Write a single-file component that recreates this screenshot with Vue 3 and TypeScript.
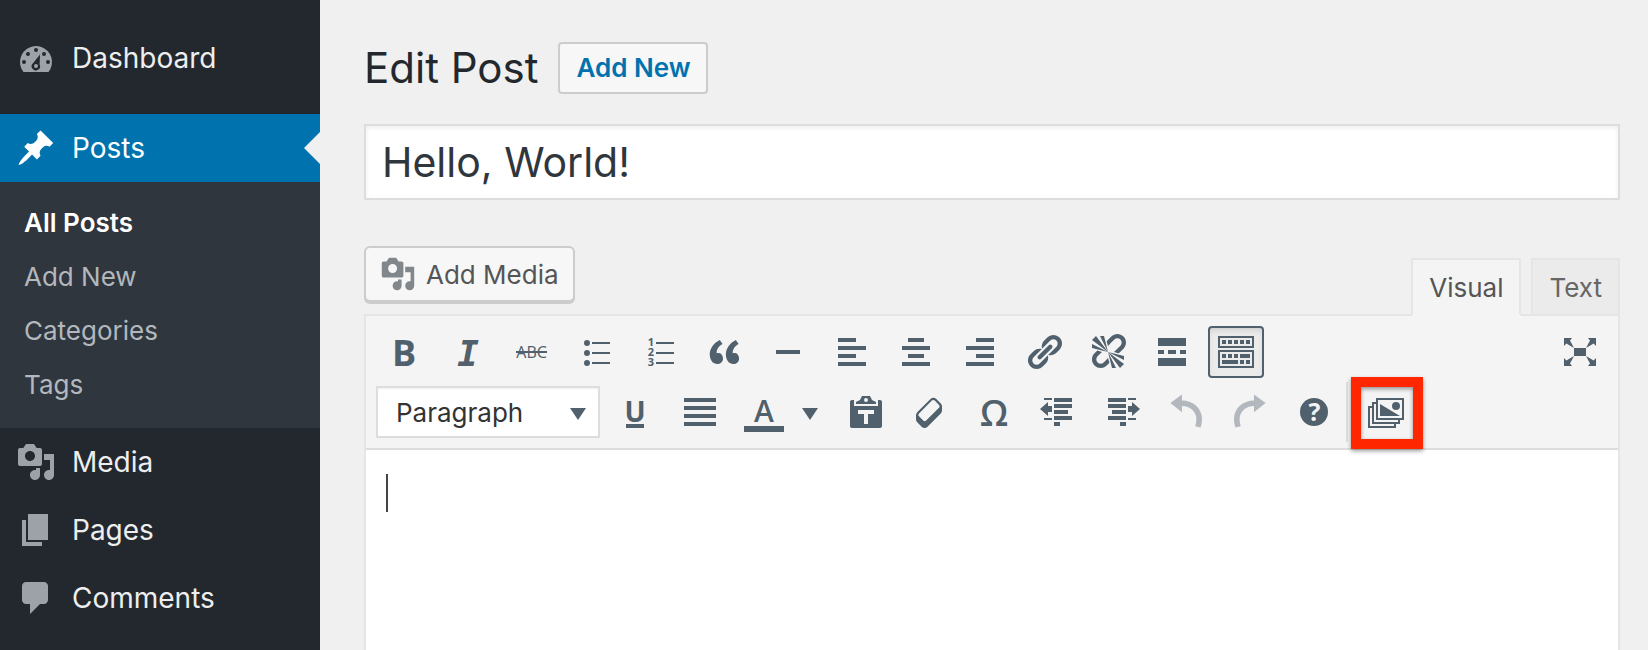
<script setup lang="ts">
import { h, ref, type FunctionalComponent } from 'vue'

interface Label {
  t: string
  x: number
  y: number
  size: number
  weight?: number
  family?: string
  style?: string
  fill?: string
}

interface Glyph {
  d?: string
  labels?: Label[]
  flip?: boolean
  solid?: boolean
}

const outdentPath =
  'M3 3h4v1H3zM3 13h4v1H3zM8 3h9v2H8zM8 6h9v2H8zM8 9h7v2H8zM8 12h9v2H8zM8 15h3v2H8zM1 8.5L5 5v2h2v3H5v2z'
const undoPath =
  'M2.2 5.5L8 1.2v3C13.6 4.2 18 8.2 18 13.4c0 1.4-.2 2.9-.7 4.3l-2.7-.6c.4-1.1.6-2.3.6-3.5C15.2 9.900 12.1 7 8 7v3.1z'
const dotsRow = [3, 6, 9, 12, 15].map((x) => `M${x} 4h2v2h-2z`).join('')

const glyphs: Record<string, Glyph> = {
  dashboard: {
    d: 'M3.76 17h12.48A8 8 0 1 0 2 12c0 1.9.66 3.64 1.76 5zM10 5a1 1 0 1 1 0 2 1 1 0 0 1 0-2zM6 7a1 1 0 1 1 0 2 1 1 0 0 1 0-2zM14 7a1 1 0 1 1 0 2 1 1 0 0 1 0-2zM4 11a1 1 0 1 1 0 2 1 1 0 0 1 0-2zM16 11a1 1 0 1 1 0 2 1 1 0 0 1 0-2zM12 8.200l-.2 5a2.100 2.100 0 1 1-3.300-.6zM10 13a1 1 0 1 0 0 2 1 1 0 0 0 0-2z',
  },
  pin: {
    d: 'M10.44 3.02l1.82-1.82 6.36 6.35-1.83 1.82c-1.05-.68-2.48-.57-3.41.36l-.75.75c-.92.93-1.04 2.35-.35 3.41l-1.83 1.82-2.41-2.41-2.8 2.79c-.42.42-3.38 2.71-3.8 2.29s1.86-3.39 2.28-3.81l2.79-2.79L4.1 9.36l1.83-1.82c1.05.69 2.48.57 3.4-.36l.75-.75c.93-.92 1.05-2.35.36-3.41z',
  },
  media: {
    d: 'M13 11V4c0-.55-.45-1-1-1h-1.67L9 1H5L3.67 3H2c-.55 0-1 .45-1 1v7c0 .55.45 1 1 1h10c.55 0 1-.45 1-1zM7 4.5c1.38 0 2.5 1.12 2.5 2.5S8.38 9.5 7 9.5 4.5 8.38 4.5 7 5.62 4.5 7 4.5zM14 6h5v10.5c0 1.38-1.12 2.5-2.5 2.5S14 17.88 14 16.5s1.12-2.5 2.5-2.5c.17 0 .34.02.5.05V9h-3V6zm-4 8.05V13h2v3.5c0 1.38-1.12 2.5-2.5 2.5S7 17.88 7 16.5 8.12 14 9.5 14c.17 0 .34.02.5.05z',
  },
  pages: { d: 'M6 15V2h10v13H6zm-1 1h8v2H3V5h2v11z' },
  comments: {
    d: 'M5 2h9c1.1 0 2 .9 2 2v7c0 1.1-.9 2-2 2h-2l-5 5v-5H5c-1.1 0-2-.9-2-2V4c0-1.1.9-2 2-2z',
  },
  bold: { labels: [{ t: 'B', x: 10, y: 17, size: 18, weight: 700 }] },
  italic: {
    labels: [
      { t: 'I', x: 10, y: 17, size: 18, weight: 700, family: 'DejaVu Sans Mono', style: 'italic' },
    ],
  },
  strike: {
    d: 'M2 9.5h15.5v1H2z',
    labels: [{ t: 'ABC', x: 9.8, y: 13, size: 8, weight: 500 }],
  },
  bullets: {
    d: 'M5.5 4a1.5 1.5 0 1 1 0 3 1.5 1.5 0 0 1 0-3zM5.5 9a1.5 1.5 0 1 1 0 3 1.5 1.5 0 0 1 0-3zM5.5 14a1.5 1.5 0 1 1 0 3 1.5 1.5 0 0 1 0-3zM8 5h9v1H8zM8 10h9v1H8zM8 15h9v1H8z',
  },
  numbers: {
    d: 'M8 5h9v1H8zM8 10h9v1H8zM8 15h9v1H8z',
    labels: [
      { t: '1', x: 5.5, y: 7, size: 5.5, weight: 700 },
      { t: '2', x: 5.5, y: 12, size: 5.5, weight: 700 },
      { t: '3', x: 5.5, y: 17, size: 5.5, weight: 700 },
    ],
  },
  quote: {
    d: 'M9.49 13.22c0-.74-.2-1.38-.61-1.9-.62-.78-1.83-.88-2.53-.72-.29-1.65 1.11-3.75 2.92-4.65L7.88 4c-2.73 1.3-5.42 4.28-4.96 8.05C3.21 14.43 4.59 16 6.54 16c.85 0 1.56-.25 2.12-.75s.83-1.18.83-2.03zm8.05 0c0-.74-.2-1.38-.61-1.9-.63-.78-1.83-.88-2.53-.72-.29-1.65 1.11-3.75 2.92-4.65L15.93 4c-2.73 1.3-5.41 4.28-4.95 8.05.29 2.38 1.66 3.95 3.61 3.95.85 0 1.56-.25 2.12-.75s.83-1.18.83-2.03z',
  },
  rule: { d: 'M4 9h12v2H4z' },
  left: { d: 'M3 3h9v2H3zM3 7h14v2H3zM3 11h9v2H3zM3 15h14v2H3z' },
  center: { d: 'M6 3h8v2H6zM3 7h14v2H3zM6 11h8v2H6zM3 15h14v2H3z' },
  right: { d: 'M8 3h9v2H8zM3 7h14v2H3zM8 11h9v2H8zM3 15h14v2H3z' },
  justify: { d: 'M2 3h16v2H2zM2 7h16v2H2zM2 11h16v2H2zM2 15h16v2H2z' },
  link: {
    d: 'M17.74 2.76c1.68 1.69 1.68 4.41 0 6.1l-1.53 1.52c-1.12 1.12-2.7 1.47-4.14 1.09l2.62-2.61.76-.77.76-.76c.84-.84.84-2.2 0-3.04-.84-.85-2.2-.85-3.04 0l-.77.76-3.38 3.38c-.37-1.44-.02-3.02 1.1-4.14l1.52-1.53c1.69-1.68 4.42-1.68 6.1 0zM8.59 13.43l5.34-5.34c.42-.42.42-1.1 0-1.52-.44-.43-1.13-.39-1.53 0l-5.33 5.34c-.42.42-.42 1.1 0 1.52.44.43 1.13.39 1.52 0zm-.76 2.29l4.14-4.15c.38 1.44.03 3.02-1.09 4.14l-1.52 1.53c-1.69 1.68-4.41 1.68-6.1 0-1.68-1.68-1.68-4.42 0-6.1l1.53-1.52c1.12-1.12 2.7-1.47 4.14-1.1l-4.14 4.15c-.85.84-.85 2.2 0 3.05.84.84 2.2.84 3.04 0z',
  },
  unlink: {
    solid: true,
    d: 'M17.74 2.26c1.68 1.69 1.68 4.41 0 6.1l-1.53 1.52c-.32.33-.69.58-1.08.77L13 10l1.69-1.64.76-.77.76-.76c.84-.84.84-2.2 0-3.04-.84-.85-2.2-.85-3.04 0l-.77.76-.76.76L10 7l-.65-2.14c.19-.38.44-.75.77-1.07l1.52-1.53c1.69-1.68 4.42-1.68 6.1 0zM2 4l8 6-6-8zm4-2l4 8-2-8H6zM2 6l8 4-8-2V6zm7.36 7.69L10 13l.74 2.35-1.38 1.39c-1.69 1.68-4.41 1.68-6.1 0-1.68-1.68-1.68-4.42 0-6.1l1.39-1.38L7 10l-.69.64-1.52 1.53c-.85.84-.85 2.2 0 3.04.84.85 2.2.85 3.04 0zM18 16l-8-6 6 8zm-4 2l-4-8 2 8h2zm4-4l-8-4 8 2v2z',
  },
  more: { d: 'M3 3h14v4H3zM3 9h3v2H3zM8 9h4v2H8zM14 9h3v2h-3zM3 13h14v4H3z' },
  sink: {
    d:
      'M1 2h18v6H1zM2 3v4h16V3zM1 9h18v9H1zM2 10v7h16v-7z' +
      dotsRow +
      'M3 11h2v2H3zM6 11h2v2H6zM9 11h2v2H9zM12 11h5v2h-5zM3 14h8v2H3zM12 14h2v2h-2zM15 14h2v2h-2z',
  },
  fullscreen: {
    d: 'M7 8h6v4H7zM2 3h4L5 4.200 7 8 3.200 5.700 2 7zM18 3h-4l1 1.200L13 8l3.800-2.300L18 7zM2 17h4l-1-1.200L7 12l-3.800 2.300L2 13zM18 17h-4l1-1.200-2-3.800 3.800 2.300L18 13z',
  },
  underline: {
    d: 'M5 16h9v2H5z',
    labels: [{ t: 'U', x: 9.5, y: 15, size: 14, weight: 700 }],
  },
  color: {
    d: 'M0 17h20v3H0z',
    labels: [{ t: 'A', x: 10, y: 15, size: 15, weight: 600 }],
  },
  paste: {
    d: 'M3 4h1v3h12V4h1c.6 0 1 .4 1 1v12c0 .6-.4 1-1 1H3c-.6 0-1-.4-1-1V5c0-.6.4-1 1-1zM6 9v2h3v5h2v-5h3V9zM5 6V5l2-1 1-2h4l1 2 2 1v1zM10 3a1 1 0 1 0 0 2 1 1 0 0 0 0-2z',
  },
  eraser: {
    d: 'M14.29 4.59l1.1 1.11c.41.4.61.94.61 1.47v2.12c0 .53-.2 1.07-.61 1.47l-6.63 6.63c-.4.41-.94.61-1.47.61s-1.07-.2-1.47-.61l-1.11-1.1-1.1-1.11c-.41-.4-.61-.94-.61-1.47v-2.12c0-.54.2-1.07.61-1.48l6.63-6.62c.4-.41.94-.61 1.47-.61s1.06.2 1.47.61zm-6.21 9.7l6.42-6.42c.39-.39.39-1.03 0-1.43L12.36 4.3c-.19-.19-.45-.29-.72-.29s-.52.1-.71.29l-6.42 6.42c-.39.4-.39 1.04 0 1.43l2.14 2.14c.38.38 1.04.38 1.43 0z',
  },
  omega: { labels: [{ t: 'Ω', x: 10, y: 17, size: 18, weight: 600 }] },
  outdent: { d: outdentPath },
  indent: { d: outdentPath, flip: true },
  undo: { d: undoPath },
  redo: { d: undoPath, flip: true },
  help: {
    d: 'M10 3a7 7 0 1 1 0 14 7 7 0 0 1 0-14z',
    labels: [{ t: '?', x: 10.2, y: 14.5, size: 12.5, weight: 700, fill: '#f4f4f4' }],
  },
  gallery: {
    d: 'M5 3h14v11H5zM6 4v9h12V4zM7 6l10 6H7zM15 5a2 2 0 1 1 0 4 2 2 0 0 1 0-4zM3 5h2v1H4v9h12v-1h1v2H3zM1 7h2v1H2v9h12v-1h1v2H1z',
  },
}

const Icon: FunctionalComponent<{ name: string }> = (props) => {
  const glyph = glyphs[props.name]
  const shapes = []
  if (glyph.d) {
    shapes.push(
      h('path', {
        d: glyph.d,
        'fill-rule': glyph.solid ? 'nonzero' : 'evenodd',
        transform: glyph.flip ? 'matrix(-1 0 0 1 20 0)' : undefined,
      }),
    )
  }
  for (const l of glyph.labels ?? []) {
    shapes.push(
      h(
        'text',
        {
          x: l.x,
          y: l.y,
          'text-anchor': 'middle',
          'font-size': l.size,
          'font-weight': l.weight ?? 400,
          'font-style': l.style ?? 'normal',
          'font-family': `"${l.family ?? 'Open Sans'}", sans-serif`,
          fill: l.fill,
        },
        l.t,
      ),
    )
  }
  return h('svg', { viewBox: '0 0 20 20', fill: 'currentColor', 'aria-hidden': 'true' }, shapes)
}
Icon.props = ['name']

const submenu = ['All Posts', 'Add New', 'Categories', 'Tags']
const lowerMenu = [
  { label: 'Media', icon: 'media' },
  { label: 'Pages', icon: 'pages' },
  { label: 'Comments', icon: 'comments' },
]

const firstRow = [
  { icon: 'bold', label: 'Bold' },
  { icon: 'italic', label: 'Italic' },
  { icon: 'strike', label: 'Strikethrough' },
  { icon: 'bullets', label: 'Bulleted list' },
  { icon: 'numbers', label: 'Numbered list' },
  { icon: 'quote', label: 'Blockquote' },
  { icon: 'rule', label: 'Horizontal line' },
  { icon: 'left', label: 'Align left' },
  { icon: 'center', label: 'Align center' },
  { icon: 'right', label: 'Align right' },
  { icon: 'link', label: 'Insert link' },
  { icon: 'unlink', label: 'Remove link' },
  { icon: 'more', label: 'Insert Read More tag' },
]
const secondRow = [
  { icon: 'paste', label: 'Paste as text' },
  { icon: 'eraser', label: 'Clear formatting' },
  { icon: 'omega', label: 'Special character' },
  { icon: 'outdent', label: 'Decrease indent' },
  { icon: 'indent', label: 'Increase indent' },
  { icon: 'undo', label: 'Undo', disabled: true },
  { icon: 'redo', label: 'Redo', disabled: true },
  { icon: 'help', label: 'Keyboard shortcuts' },
]

const title = ref('Hello, World!')
const body = ref('')
const format = ref('Paragraph')
const mode = ref('Visual')
const expanded = ref(true)
</script>

<template>
  <div class="admin">
    <nav class="sidebar" aria-label="Main menu">
      <a class="item dashboard" href="#"><Icon name="dashboard" class="icon" />Dashboard</a>
      <a class="item current" href="#"><Icon name="pin" class="icon" />Posts</a>
      <ul class="submenu">
        <li v-for="(entry, i) in submenu" :key="entry">
          <a href="#" :class="{ active: i === 0 }">{{ entry }}</a>
        </li>
      </ul>
      <a v-for="m in lowerMenu" :key="m.label" class="item" href="#">
        <Icon :name="m.icon" class="icon" />{{ m.label }}
      </a>
    </nav>

    <main class="main">
      <header class="heading">
        <h1>Edit Post</h1>
        <a class="add-new" href="#">Add New</a>
      </header>

      <input v-model="title" class="title" type="text" aria-label="Post title" />

      <div class="tools">
        <button class="add-media" type="button"><Icon name="media" class="media-icon" />Add Media</button>
        <div class="tabs">
          <button
            v-for="tab in ['Visual', 'Text']"
            :key="tab"
            type="button"
            class="tab"
            :class="{ selected: mode === tab }"
            @click="mode = tab"
          >
            {{ tab }}
          </button>
        </div>
      </div>

      <section class="editor">
        <div class="toolbar" role="toolbar" aria-label="Formatting">
          <div class="row">
            <button v-for="b in firstRow" :key="b.icon" type="button" class="tool" :aria-label="b.label">
              <Icon :name="b.icon" class="icon" />
            </button>
            <button
              type="button"
              class="tool"
              :class="{ pressed: expanded }"
              :aria-pressed="expanded"
              aria-label="Toolbar toggle"
              @click="expanded = !expanded"
            >
              <Icon name="sink" class="icon" />
            </button>
            <button type="button" class="tool push" aria-label="Distraction-free writing">
              <Icon name="fullscreen" class="icon" />
            </button>
          </div>
          <div class="row">
            <div class="format">
              <select v-model="format" aria-label="Text format">
                <option>Paragraph</option>
                <option>Heading 1</option>
                <option>Heading 2</option>
                <option>Preformatted</option>
              </select>
              <svg class="arrow" viewBox="0 0 16 12" aria-hidden="true"><path d="M0 0h16L8 12z" /></svg>
            </div>
            <button type="button" class="tool" aria-label="Underline"><Icon name="underline" class="icon" /></button>
            <button type="button" class="tool" aria-label="Justify"><Icon name="justify" class="icon" /></button>
            <div class="split">
              <button type="button" class="tool" aria-label="Text color"><Icon name="color" class="icon" /></button>
              <button type="button" class="open" aria-label="Choose text color">
                <svg class="caret-down" viewBox="0 0 16 12" aria-hidden="true"><path d="M0 0h16L8 12z" /></svg>
              </button>
            </div>
            <button
              v-for="b in secondRow"
              :key="b.icon"
              type="button"
              class="tool"
              :disabled="b.disabled"
              :aria-label="b.label"
            >
              <Icon :name="b.icon" class="icon" />
            </button>
            <div class="plugins">
              <button type="button" class="tool marked" aria-label="Add gallery">
                <Icon name="gallery" class="icon" />
                <span class="marker"></span>
              </button>
            </div>
          </div>
        </div>
        <div class="canvas">
          <textarea v-model="body" aria-label="Post content"></textarea>
          <span v-if="!body" class="cursor"></span>
        </div>
      </section>
    </main>
  </div>
</template>

<style>
body {
  margin: 0;
  background: #f0f0f0;
}
</style>

<style scoped>
.admin {
  display: flex;
  min-height: 100vh;
  background: #f0f0f0;
  color: #444;
  font-family: Inter, 'Liberation Sans', sans-serif;
  font-size: 26px;
}
.admin * {
  box-sizing: border-box;
}
button,
input,
select,
textarea {
  margin: 0;
  font: inherit;
}
.icon {
  display: block;
  flex: none;
  width: 40px;
  height: 40px;
  overflow: visible;
}

.sidebar {
  flex: none;
  width: 320px;
  background: #22282e;
}
.item {
  display: flex;
  align-items: center;
  gap: 16px;
  height: 68px;
  padding-left: 16px;
  color: #eee;
  font-size: 28px;
  text-decoration: none;
}
.item .icon {
  color: #9ca2a8;
}
.dashboard {
  margin: 24px 0 22px;
}
.current {
  position: relative;
  background: #0073ae;
  color: #fff;
}
.current .icon {
  color: #fff;
}
.current::after {
  content: '';
  position: absolute;
  top: 18px;
  right: 0;
  border: 16px solid transparent;
  border-left: 0;
  border-right-color: #f0f0f0;
}
.submenu {
  margin: 0;
  padding: 14px 0 16px;
  background: #30363d;
  list-style: none;
}
.submenu a {
  display: block;
  padding-left: 24px;
  color: #b2b8be;
  line-height: 54px;
  text-decoration: none;
}
.submenu .active {
  color: #fff;
  font-weight: 600;
}

.main {
  display: flex;
  flex: 1;
  flex-direction: column;
  min-width: 0;
  padding: 42px 28px 0 44px;
}
.heading {
  display: flex;
  align-items: center;
  gap: 20px;
  height: 52px;
}
h1 {
  margin: 0;
  color: #22282e;
  font-size: 42px;
  font-weight: 400;
  line-height: 52px;
}
.add-new {
  padding: 0 16px;
  border: 2px solid #ccc;
  border-radius: 4px;
  background: #f7f7f7;
  color: #0073ae;
  font-weight: 600;
  line-height: 48px;
  text-decoration: none;
}
.title {
  width: 100%;
  height: 76px;
  margin-top: 30px;
  padding: 0 16px;
  border: 2px solid #ddd;
  outline: 0;
  background: #fff;
  box-shadow: inset 0 2px 4px rgba(0, 0, 0, 0.07);
  color: #30363d;
  font-size: 41px;
}
.tools {
  display: flex;
  justify-content: space-between;
  margin-top: 46px;
}
.add-media {
  display: flex;
  align-items: center;
  gap: 10px;
  height: 56px;
  padding: 0 14px;
  border: 2px solid #ccc;
  border-radius: 6px;
  background: #f7f7f7;
  box-shadow: 0 2px 0 #ccc;
  color: #555;
}
.media-icon {
  width: 36px;
  height: 36px;
  color: #82878c;
}
.tabs {
  display: flex;
  gap: 10px;
  margin: 12px 0 -2px;
}
.tab {
  position: relative;
  height: 58px;
  padding: 0 16px;
  border: 2px solid #e5e5e5;
  background: #ebebeb;
  color: #666;
}
.tab.selected {
  border-bottom-color: #f4f4f4;
  background: #f4f4f4;
  color: #555;
}

.editor {
  display: flex;
  flex: 1;
  flex-direction: column;
  border: 2px solid #e5e5e5;
  border-bottom: 0;
  background: #fff;
}
.toolbar {
  padding: 6px 10px;
  border-bottom: 2px solid #ddd;
  background: #f4f4f4;
}
.row {
  display: flex;
  align-items: center;
  gap: 8px;
  height: 60px;
}
.tool {
  display: grid;
  flex: none;
  place-content: center;
  width: 56px;
  height: 52px;
  padding: 0;
  border: 2px solid transparent;
  border-radius: 4px;
  background: none;
  color: #50606c;
}
.tool:disabled {
  color: #b2b8be;
}
.pressed {
  border-color: #50606c;
  background: #ebebeb;
  box-shadow: inset 0 4px 10px -6px rgba(0, 0, 0, 0.3);
}
.push {
  margin-left: auto;
}
.format {
  position: relative;
  width: 224px;
}
.format select {
  display: block;
  width: 100%;
  height: 52px;
  padding: 0 36px 0 18px;
  border: 2px solid #ddd;
  border-radius: 0;
  appearance: none;
  background: #fff;
  box-shadow: inset 0 2px 2px -1px rgba(0, 0, 0, 0.07);
  color: #333;
}
.arrow {
  position: absolute;
  top: 22px;
  right: 14px;
  width: 16px;
  height: 12px;
  fill: #50606c;
  pointer-events: none;
}
.split {
  display: flex;
}
.open {
  display: grid;
  place-content: center;
  width: 38px;
  height: 52px;
  padding: 4px 2px 0 0;
  border: 0;
  background: none;
}
.caret-down {
  width: 16px;
  height: 12px;
  fill: #50606c;
}
.plugins {
  display: flex;
  align-items: center;
  height: 60px;
  margin-left: -4px;
  padding-left: 10px;
  border-left: 2px solid #ddd;
}
.marked {
  position: relative;
}
.marker {
  position: absolute;
  top: -11px;
  left: -9px;
  width: 72px;
  height: 72px;
  border: 10px solid #ff2600;
  filter: drop-shadow(0 2px 2px rgba(0, 0, 0, 0.4));
  pointer-events: none;
}
.canvas {
  position: relative;
  display: flex;
  flex: 1;
}
.canvas textarea {
  flex: 1;
  padding: 20px;
  border: 0;
  outline: 0;
  background: transparent;
  resize: none;
}
.cursor {
  position: absolute;
  top: 24px;
  left: 20px;
  width: 2px;
  height: 38px;
  background: #444;
}
</style>
